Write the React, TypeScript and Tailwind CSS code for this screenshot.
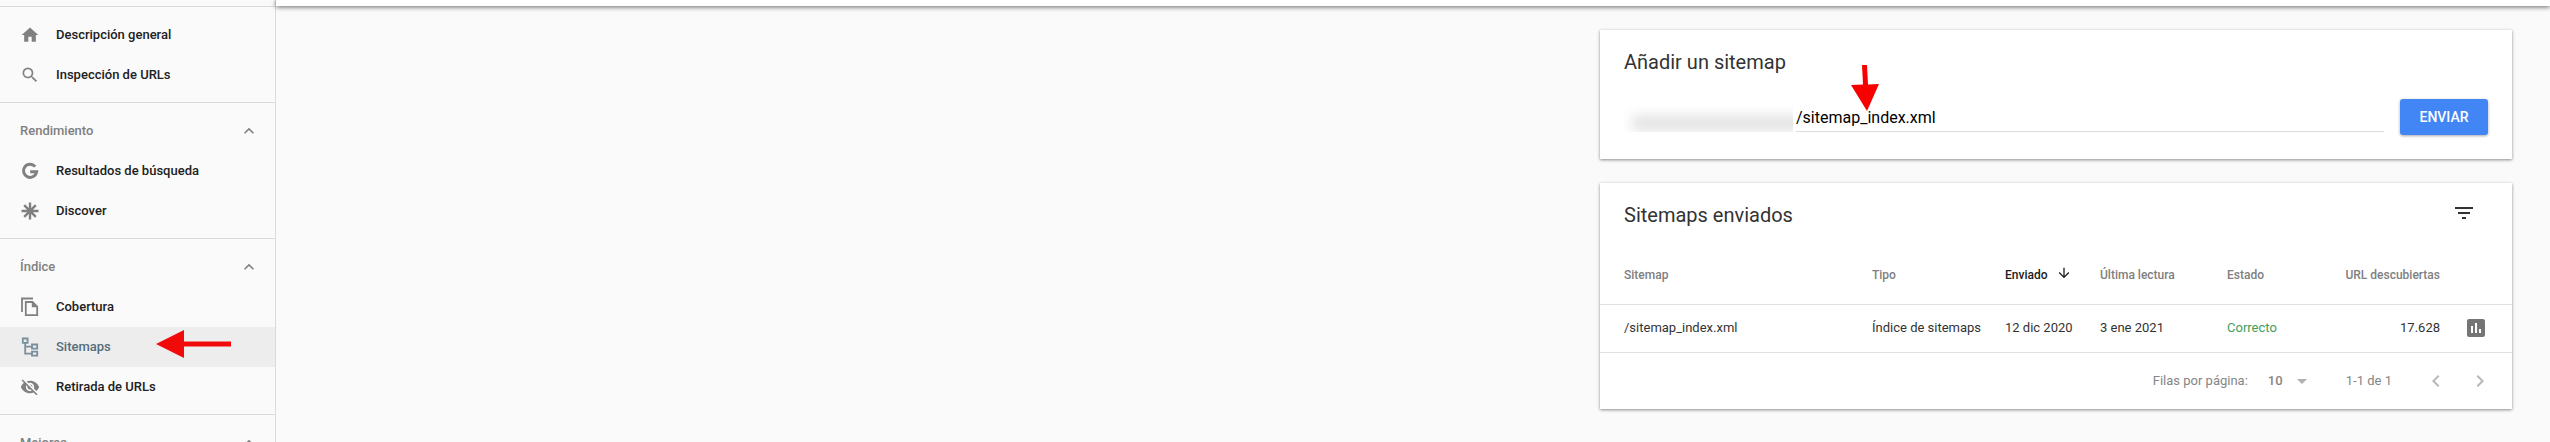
import React from "react";
import {
  MdArrowDownward,
  MdArrowDropDown,
  MdChevronLeft,
  MdChevronRight,
  MdExpandLess,
  MdFilterList,
  MdHome,
  MdInsertChart,
  MdSearch,
  MdVisibilityOff,
} from "react-icons/md";

interface NavItem {
  label: string;
  icon: React.ReactNode;
  active?: boolean;
}

interface NavSection {
  title?: string;
  items: NavItem[];
}

const GoogleIcon: React.FC = () => (
  <svg viewBox="0 0 20 20" className="size-5" fill="none" stroke="currentColor" strokeWidth="3">
    <path d="M15.2 5.6A6.6 6.6 0 1 0 16.6 10.8H10.2" />
  </svg>
);

const DiscoverIcon: React.FC = () => (
  <svg viewBox="0 0 20 20" className="size-5" fill="none" stroke="currentColor" strokeWidth="2.4">
    <path d="M10 1.500v17M1.500 10h17M4.200 4.200l11.600 11.600M15.800 4.200L4.200 15.800" />
    <circle cx="10" cy="10" r="2.800" fill="currentColor" stroke="none" />
  </svg>
);

const CopyIcon: React.FC = () => (
  <svg viewBox="0 0 20 20" className="size-5" fill="none" stroke="currentColor" strokeWidth="1.8">
    <path d="M2 15V1.500H13" />
    <path d="M5.800 5h6.700l4.700 4.700v8.500H5.800z" />
    <path d="M11.800 5v5.200h5.200z" fill="currentColor" stroke="none" />
  </svg>
);

const SitemapIcon: React.FC = () => (
  <svg viewBox="0 0 20 20" className="size-5" fill="none" stroke="currentColor" strokeWidth="1.8">
    <path d="M2.800 1.500h4.800v4.400H2.800zM12 7.500h5.200v4.200H12zM12 14.600h5.200V18.600H12z" />
    <path d="M5.200 5.900v10.700H12M5.200 9.600H12" />
  </svg>
);

const sections: NavSection[] = [
  {
    items: [
      { label: "Descripción general", icon: <MdHome className="size-5" /> },
      { label: "Inspección de URLs", icon: <MdSearch className="size-5" /> },
    ],
  },
  {
    title: "Rendimiento",
    items: [
      { label: "Resultados de búsqueda", icon: <GoogleIcon /> },
      { label: "Discover", icon: <DiscoverIcon /> },
    ],
  },
  {
    title: "Índice",
    items: [
      { label: "Cobertura", icon: <CopyIcon /> },
      { label: "Sitemaps", icon: <SitemapIcon />, active: true },
      { label: "Retirada de URLs", icon: <MdVisibilityOff className="size-5" /> },
    ],
  },
  { title: "Mejoras", items: [] },
];

const Sidebar: React.FC = () => (
  <nav className="w-[276px] shrink-0 border-r border-[#dadada] pt-[6px]">
    {sections.map((section, i) => (
      <div key={i} className="border-t border-[#dadada] pt-2 pb-[7px]">
        {section.title && (
          <button
            type="button"
            className="flex h-10 w-full items-center justify-between pr-4 pl-5 text-[13px] font-medium text-[#808080]"
          >
            {section.title}
            <MdExpandLess className="size-5" />
          </button>
        )}
        {section.items.map((item) => (
          <a
            key={item.label}
            href="#"
            className={
              item.active
                ? "flex h-10 items-center gap-4 bg-[#ededed] pl-5 text-[13px] font-medium text-[#546e7a]"
                : "flex h-10 items-center gap-4 pl-5 text-[13px] font-medium text-[#212121]"
            }
          >
            <span className={item.active ? "text-[#78909c]" : "text-[#808080]"}>{item.icon}</span>
            {item.label}
          </a>
        ))}
      </div>
    ))}
  </nav>
);

const AddSitemap: React.FC = () => {
  const [path, setPath] = React.useState("/sitemap_index.xml");

  return (
    <section className="relative bg-white px-6 pt-[18px] pb-6 shadow-[0_1px_3px_rgba(0,0,0,0.45)]">
      <h2 className="text-xl leading-7 text-[#333]">Añadir un sitemap</h2>
      <form className="mt-[23px] flex gap-4" onSubmit={(e) => e.preventDefault()}>
        <div className="flex h-[33px] min-w-0 flex-1 gap-[3px]">
          {/* domain stays hidden */}
          <div className="w-[169px] overflow-hidden pt-4">
            <div className="ml-2 h-4 w-[180px] bg-[#e4e4e4] blur-[6px]" />
          </div>
          <input
            type="text"
            aria-label="URL del sitemap"
            value={path}
            onChange={(e) => setPath(e.target.value)}
            className="min-w-0 flex-1 border-b border-[#dcdcdc] pt-[6px] text-base text-black outline-none"
          />
        </div>
        <button
          type="submit"
          className="h-9 w-[88px] rounded-[3px] bg-[#4285f4] text-sm font-medium text-white shadow-[0_1px_3px_rgba(0,0,0,0.35)]"
        >
          ENVIAR
        </button>
      </form>
      <svg viewBox="0 0 28 48" className="absolute top-[34px] left-[251px] h-12 w-7" fill="#f80000">
        <path d="M11 1h5l1 19.500l11-.5-12 27L0 21l12-.5z" />
      </svg>
    </section>
  );
};

const SentSitemaps: React.FC = () => (
  <section className="bg-white shadow-[0_1px_3px_rgba(0,0,0,0.45)]">
    <div className="flex h-16 items-start justify-between pt-[18px] pr-9 pl-6">
      <h2 className="text-xl leading-7 text-[#333]">Sitemaps enviados</h2>
      <button type="button" aria-label="Filtrar">
        <MdFilterList className="size-6 text-[#333]" />
      </button>
    </div>
    <table className="w-full table-fixed text-left text-[13px] text-[#333]">
      <colgroup>
        <col />
        <col className="w-[133px]" />
        <col className="w-[95px]" />
        <col className="w-[127px]" />
        <col className="w-[213px]" />
        <col className="w-[72px]" />
      </colgroup>
      <thead>
        <tr className="h-[57px] border-b border-[#e0e0e0] text-xs text-[#808080]">
          <th className="pl-6 font-medium">Sitemap</th>
          <th className="font-medium">Tipo</th>
          <th className="font-medium text-[#212121]">
            <button type="button" className="flex items-center gap-2">
              Enviado
              <MdArrowDownward className="mb-1 size-4" />
            </button>
          </th>
          <th className="font-medium">Última lectura</th>
          <th className="font-medium">
            <div className="flex justify-between">
              <span>Estado</span>
              <span>URL descubiertas</span>
            </div>
          </th>
          <th />
        </tr>
      </thead>
      <tbody>
        <tr className="h-12 border-b border-[#e0e0e0]">
          <td className="pl-6">/sitemap_index.xml</td>
          <td>Índice de sitemaps</td>
          <td>12 dic 2020</td>
          <td>3 ene 2021</td>
          <td>
            <div className="flex justify-between">
              <span className="text-[#3f9d5c]">Correcto</span>
              <span>17.628</span>
            </div>
          </td>
          <td className="pr-6">
            <MdInsertChart className="ml-auto size-6 text-[#757575]" />
          </td>
        </tr>
      </tbody>
    </table>
    <div className="flex h-14 items-center justify-end gap-8 pr-5 text-[13px] text-[#858585]">
      <div className="flex items-center gap-5">
        <label htmlFor="rows">Filas por página:</label>
        <div className="relative">
          <select id="rows" className="w-[46px] appearance-none font-medium outline-none" defaultValue="10">
            <option>10</option>
            <option>25</option>
            <option>50</option>
          </select>
          <MdArrowDropDown className="pointer-events-none absolute -top-0.5 right-0 size-6 text-[#b0b0b0]" />
        </div>
      </div>
      <span>1-1 de 1</span>
      <div className="flex gap-5 text-[#b8b8b8]">
        <button type="button" aria-label="Anterior">
          <MdChevronLeft className="size-6" />
        </button>
        <button type="button" aria-label="Siguiente">
          <MdChevronRight className="size-6" />
        </button>
      </div>
    </div>
  </section>
);

const App: React.FC = () => {
  return (
    <div className="relative flex h-screen overflow-hidden bg-[#fafafa] font-[Roboto,sans-serif]">
      <Sidebar />
      <div className="min-w-0 flex-1">
        <header className="h-[6px] bg-white shadow-[0_1px_5px_rgba(0,0,0,0.6)]" />
        <main className="ml-auto flex max-w-[950px] flex-col gap-6 pt-6 pr-[38px]">
          <AddSitemap />
          <SentSitemaps />
        </main>
      </div>
      <svg viewBox="0 0 76 28" className="absolute top-[330px] left-[156px] h-7 w-[76px]" fill="#f20a0a">
        <path d="M0 14L28 0v11.500h47v5H28V28z" />
      </svg>
    </div>
  );
};

export default App;
